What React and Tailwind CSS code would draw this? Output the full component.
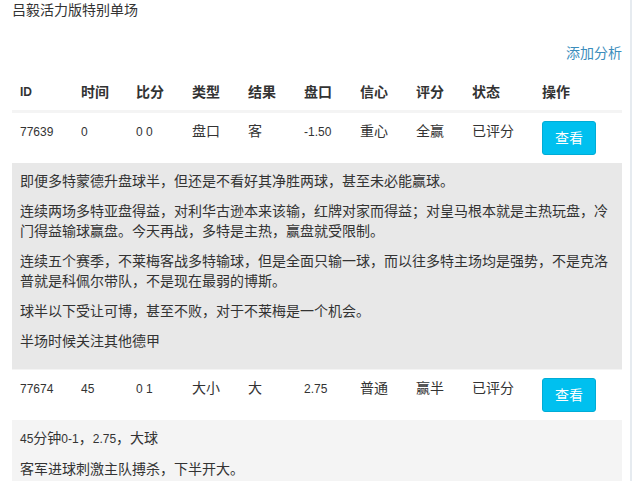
import React from "react";

const font = { fontFamily: '"Liberation Sans", Arial, "Noto Sans CJK SC", sans-serif' };

const cols = ["w-[61px]", "w-[55px]", "w-[56px]", "w-[56px]", "w-[56px]", "w-[56px]", "w-[56px]", "w-[56px]", "w-[70px]", "flex-1"];

function Num({ children }) {
  return <span className="text-[12px]">{children}</span>;
}

function Row({ cells }) {
  return (
    <div className="flex border-t border-[#f4f4f4] bg-white">
      {cells.map((c, i) => (
        <div key={i} className={`${cols[i]} shrink-0 px-2 pt-2 pb-2 leading-[20px]`}>
          {i === 9 ? (
            <button className="h-[34px] w-[54px] rounded-[3px] border border-[#00acd6] bg-[#00c0ef] text-[14px] text-white">
              查看
            </button>
          ) : c.num ? (
            <span className="text-[12px] text-[#333]">{c.t}</span>
          ) : (
            <span className="text-[14px] text-[#333]">{c.t}</span>
          )}
        </div>
      ))}
    </div>
  );
}

function Panel({ paras, bg }) {
  return (
    <div className={`${bg} px-2 pt-2 pb-2 text-[14px] leading-[20px] text-[#333]`}>
      {paras.map((p, i) => (
        <p key={i} className="mb-[10px]">
          {p}
        </p>
      ))}
    </div>
  );
}

export default function App() {
  const headers = ["ID", "时间", "比分", "类型", "结果", "盘口", "信心", "评分", "状态", "操作"];
  return (
    <div className="flex min-h-[481px] w-[634px] bg-white" style={font}>
      <div className="w-[630px] shrink-0 pl-3 pr-2">
        <div className="h-[20px] text-[14px] leading-[20px] text-[#333]">吕毅活力版特别单场</div>
        <div className="mt-[23px] flex h-[20px] justify-end">
          <a className="text-[14px] leading-[20px] text-[#3c8dbc]">添加分析</a>
        </div>
        <div className="mt-[11px]">
          <div className="flex border-b-2 border-[#f4f4f4]">
            {headers.map((h, i) => (
              <div
                key={i}
                className={`${cols[i]} shrink-0 px-2 py-2 font-bold leading-[20px] text-[#333] ${i === 0 ? "text-[12px]" : "text-[14px]"}`}
              >
                {h}
              </div>
            ))}
          </div>
          <Row
            cells={[
              { t: "77639", num: true },
              { t: "0", num: true },
              { t: "0 0", num: true },
              { t: "盘口" },
              { t: "客" },
              { t: "-1.50", num: true },
              { t: "重心" },
              { t: "全赢" },
              { t: "已评分" },
              {},
            ]}
          />
          <Panel
            bg="bg-[#e8e8e8]"
            paras={[
              "即便多特蒙德升盘球半，但还是不看好其净胜两球，甚至未必能赢球。",
              "连续两场多特亚盘得益，对利华古逊本来该输，红牌对家而得益；对皇马根本就是主热玩盘，冷门得益输球赢盘。今天再战，多特是主热，赢盘就受限制。",
              "连续五个赛季，不莱梅客战多特输球，但是全面只输一球，而以往多特主场均是强势，不是克洛普就是科佩尔带队，不是现在最弱的博斯。",
              "球半以下受让可博，甚至不败，对于不莱梅是一个机会。",
              "半场时候关注其他德甲",
            ]}
          />
          <Row
            cells={[
              { t: "77674", num: true },
              { t: "45", num: true },
              { t: "0 1", num: true },
              { t: "大小" },
              { t: "大" },
              { t: "2.75", num: true },
              { t: "普通" },
              { t: "赢半" },
              { t: "已评分" },
              {},
            ]}
          />
          <Panel
            bg="bg-[#f4f4f4]"
            paras={[
              <>
                <Num>45</Num>分钟<Num>0-1</Num>，<Num>2.75</Num>，大球
              </>,
              "客军进球刺激主队搏杀，下半开大。",
            ]}
          />
        </div>
      </div>
      <div className="w-[2px] shrink-0 bg-[#e6ebf0]" />
      <div className="flex-1 bg-white" />
    </div>
  );
}
